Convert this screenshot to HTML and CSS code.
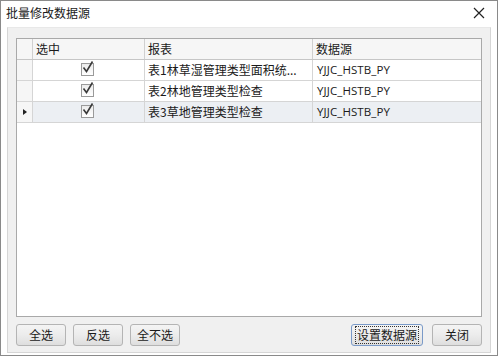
FILE: index.html
```html
<!DOCTYPE html>
<html lang="zh">
<head>
<meta charset="utf-8">
<link rel="stylesheet" href="styles.css">
</head>
<body>
<div class="window">
  <div class="titlebar">
    <span class="title">批量修改数据源</span>
    <svg class="close" width="12" height="12" viewBox="0 0 12 12"><path d="M1 1 L11 11 M11 1 L1 11" stroke="#222" stroke-width="1.2" fill="none"/></svg>
  </div>
  <div class="body">
    <div class="grid">
      <div class="row head">
        <div class="c rh"></div>
        <div class="c c1">选中</div>
        <div class="c c2">报表</div>
        <div class="c c3">数据源</div>
      </div>
      <div class="row">
        <div class="c rh"></div>
        <div class="c c1 chk"><span class="box"><svg width="14" height="14" viewBox="0 0 14 14"><path d="M2.5 7.5 L5.5 11.5 L11.5 1.5" stroke="#3a3a3a" stroke-width="1.6" fill="none"/></svg></span></div>
        <div class="c c2">表1林草湿管理类型面积统...</div>
        <div class="c c3 lat">YJJC_HSTB_PY</div>
      </div>
      <div class="row">
        <div class="c rh"></div>
        <div class="c c1 chk"><span class="box"><svg width="14" height="14" viewBox="0 0 14 14"><path d="M2.5 7.5 L5.5 11.5 L11.5 1.5" stroke="#3a3a3a" stroke-width="1.6" fill="none"/></svg></span></div>
        <div class="c c2">表2林地管理类型检查</div>
        <div class="c c3 lat">YJJC_HSTB_PY</div>
      </div>
      <div class="row cur">
        <div class="c rh"><span class="tri"></span></div>
        <div class="c c1 chk"><span class="box"><svg width="14" height="14" viewBox="0 0 14 14"><path d="M2.5 7.5 L5.5 11.5 L11.5 1.5" stroke="#3a3a3a" stroke-width="1.6" fill="none"/></svg></span></div>
        <div class="c c2">表3草地管理类型检查</div>
        <div class="c c3 lat">YJJC_HSTB_PY</div>
      </div>
    </div>
    <div class="buttons">
      <button class="btn">全选</button>
      <button class="btn">反选</button>
      <button class="btn">全不选</button>
      <span class="spacer"></span>
      <button class="btn focus"><span class="focusring">设置数据源</span></button>
      <button class="btn">关闭</button>
    </div>
  </div>
</div>
</body>
</html>
```
FILE: styles.css
```css
* { box-sizing: border-box; }
html, body { margin: 0; padding: 0; background: #fff; }
body {
  width: 498px; height: 356px;
  font-family: "Noto Sans CJK SC", "Microsoft YaHei", sans-serif;
  font-size: 12px;
  color: #1a1a1a;
}
.window {
  width: 498px; height: 356px;
  border: 1px solid #8a8a8a;
  display: flex; flex-direction: column;
  background: #fff;
}
.titlebar {
  height: 26px;
  display: flex; align-items: center;
  padding: 0 0 0 5px;
  background: #fff;
  flex: none;
}
.title { flex: 1; font-size: 12px; line-height: 14px; margin-top: -2px; }
.close { margin-right: 12px; margin-top: -2px; }
.body {
  flex: 1;
  background: #f0f0f0;
  border: 1px solid #d6d6d6;
  border-top-color: #e8e8e8;
  margin: 0 6px 2px 6px;
  display: flex; flex-direction: column;
  padding: 10px 8px 0 8px;
}
.grid {
  height: 279px;
  background: #fff;
  border: 1px solid #a9a9a9;
  flex: none;
}
.row {
  display: flex;
  height: 21px;
  border-bottom: 1px solid #d5d5d5;
}
.row.head { background: #f6f6f6; border-bottom-color: #c6c6c6; }
.row.cur .c1, .row.cur .c2, .row.cur .c3 { background: #eceff3; }
.c {
  border-right: 1px solid #d5d5d5;
  line-height: 20px;
  padding-left: 3px;
  white-space: nowrap; overflow: hidden;
}
.head .c { border-right-color: #d0d0d0; }
.rh { width: 16px; flex: none; background: #f6f6f6; padding: 0; position: relative; }
.c1 { width: 112px; flex: none; }
.c2 { width: 168px; flex: none; }
.c3 { flex: 1; border-right: none; }
.lat { font-family: "Open Sans", "DejaVu Sans", sans-serif; font-size: 11.5px; letter-spacing: 0.1px; padding-left: 4px; }
.chk { display: flex; justify-content: center; align-items: center; padding: 0; }
.box {
  width: 13px; height: 13px;
  border: 1px solid #9a9a9a;
  background: linear-gradient(#ececec, #fff);
  position: relative;
  margin-left: -3px;
  margin-top: -1px;
}
.box svg { position: absolute; left: -1px; top: -4px; }
.tri {
  position: absolute; left: 6px; top: 7px;
  width: 0; height: 0;
  border-left: 4px solid #222;
  border-top: 3.5px solid transparent;
  border-bottom: 3.5px solid transparent;
}
.buttons {
  display: flex; align-items: center;
  gap: 7px;
  margin-top: 7px;
  padding: 0;
}
.spacer { flex: 1; }
.btn {
  height: 22px; width: 50px;
  font-family: inherit; font-size: 12px; color: #1a1a1a;
  border: 1px solid #b4b4b4;
  border-radius: 3px;
  background: linear-gradient(#f4f4f4 0%, #ececec 50%, #dedede 100%);
  padding: 0;
  line-height: 18px;
  white-space: nowrap;
}
.btn.focus { border-color: #7a9ac8; padding: 0 2px; width: 72px; margin-right: 2px; }
.focusring { border: 1px dotted #333; padding: 0 1px; display: inline-block; line-height: 16px; white-space: nowrap; }
```
